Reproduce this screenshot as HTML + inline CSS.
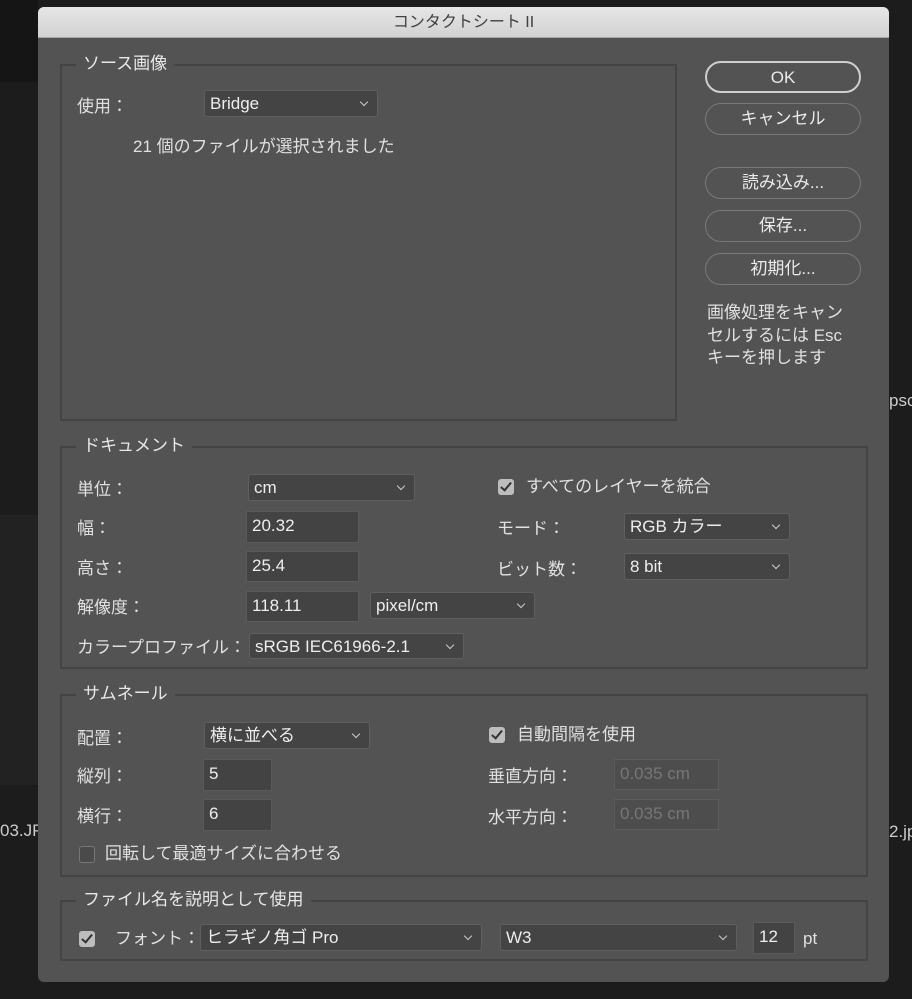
<!DOCTYPE html>
<html><head><meta charset="utf-8">
<style>
*{box-sizing:border-box;margin:0;padding:0}
body{width:912px;height:999px;background:#1c1c1c;position:relative;overflow:hidden;font-family:"Liberation Sans","Noto Sans CJK JP",sans-serif;font-size:17px;color:#e0e0e0}
.a{position:absolute;white-space:nowrap;line-height:20px}
.dlg{position:absolute;left:38px;top:7px;width:851px;height:975px;background:#535353;border-radius:6px;overflow:hidden}
.title{position:absolute;left:0;top:0;width:100%;height:31px;background:linear-gradient(#e6e6e6,#d2d2d2);border-bottom:1px solid #a8a8a8;color:#404040;text-align:center;line-height:31px;font-size:16px}
.grp{position:absolute;border:2px solid #444}
.leg{position:absolute;background:#535353;padding:0 7px;line-height:20px;top:-12px;left:14px;color:#e8e8e8}
.sel{position:absolute;background:#444;border:1px solid #5f5f5f;border-radius:3px;color:#eee;padding-left:5px;line-height:26px}
.sel:after{content:"";position:absolute;right:10px;top:8px;width:5px;height:5px;border-right:1.5px solid #ccc;border-bottom:1.5px solid #ccc;transform:rotate(45deg)}
.inp{position:absolute;background:#434343;border:1.5px solid #5a5a5a;color:#eee;padding-left:5px;line-height:28px}
.dis{background:#4d4d4d;border-color:#5c5c5c;color:#777}
.btn{position:absolute;left:667px;width:156px;height:32px;border:1.5px solid #797979;border-radius:16px;text-align:center;line-height:30px;color:#eaeaea}
.cb{position:absolute;width:16px;height:16px;border-radius:3px;background:#bdbdbd}
.cb:after{content:"";position:absolute;left:5px;top:1px;width:4px;height:9px;border-right:2.5px solid #333;border-bottom:2.5px solid #333;transform:rotate(40deg)}
.cbu{position:absolute;width:16px;height:17px;border-radius:3px;border:1.5px solid #777;background:#4a4a4a}
</style></head><body>
<div style="position:absolute;left:0;top:0;width:38px;height:82px;background:#151515"></div>
<div style="position:absolute;left:0;top:515px;width:38px;height:270px;background:#222"></div>
<div class="a" style="left:0;top:821px;color:#ccc">03.JP</div>
<div class="a" style="left:889px;top:391px;color:#ccc">psc</div>
<div class="a" style="left:889px;top:822px;color:#ccc">2.jp</div>
<div class="dlg">
<div class="title">コンタクトシート II</div>
<div class="grp" style="left:22px;top:57px;width:617px;height:357px"><div class="leg">ソース画像</div></div>
<div class="a" style="left:39px;top:90px">使用：</div>
<div class="sel" style="left:166px;top:83px;width:174px;height:27px">Bridge</div>
<div class="a" style="left:95px;top:130px">21 個のファイルが選択されました</div>
<div class="btn" style="top:54px;border-color:#cfcfcf;border-width:2px">OK</div>
<div class="btn" style="top:96px">キャンセル</div>
<div class="btn" style="top:160px">読み込み...</div>
<div class="btn" style="top:203px">保存...</div>
<div class="btn" style="top:246px">初期化...</div>
<div class="a" style="left:669px;top:295px;line-height:22.5px">画像処理をキャン<br>セルするには Esc<br>キーを押します</div>
<div class="grp" style="left:22px;top:439px;width:808px;height:223px"><div class="leg">ドキュメント</div></div>
<div class="a" style="left:39px;top:473px">単位：</div>
<div class="sel" style="left:210px;top:467px;width:167px;height:27px">cm</div>
<div class="a" style="left:39px;top:512px">幅：</div>
<div class="inp" style="left:208px;top:504px;width:113px;height:32px">20.32</div>
<div class="a" style="left:39px;top:552px">高さ：</div>
<div class="inp" style="left:208px;top:544px;width:113px;height:31px">25.4</div>
<div class="a" style="left:39px;top:591px">解像度：</div>
<div class="inp" style="left:208px;top:584px;width:113px;height:31px">118.11</div>
<div class="sel" style="left:332px;top:585px;width:165px;height:27px">pixel/cm</div>
<div class="a" style="left:39px;top:631px">カラープロファイル：</div>
<div class="sel" style="left:211px;top:626px;width:215px;height:26px">sRGB IEC61966-2.1</div>
<div class="cb" style="left:460px;top:472px"></div>
<div class="a" style="left:488px;top:470px">すべてのレイヤーを統合</div>
<div class="a" style="left:459px;top:512px">モード：</div>
<div class="sel" style="left:586px;top:506px;width:166px;height:27px">RGB カラー</div>
<div class="a" style="left:459px;top:553px">ビット数：</div>
<div class="sel" style="left:586px;top:546px;width:166px;height:27px">8 bit</div>
<div class="grp" style="left:22px;top:687px;width:808px;height:183px"><div class="leg">サムネール</div></div>
<div class="a" style="left:39px;top:722px">配置：</div>
<div class="sel" style="left:166px;top:715px;width:166px;height:27px">横に並べる</div>
<div class="a" style="left:39px;top:760px">縦列：</div>
<div class="inp" style="left:165px;top:752px;width:69px;height:32px">5</div>
<div class="a" style="left:39px;top:800px">横行：</div>
<div class="inp" style="left:165px;top:792px;width:69px;height:32px">6</div>
<div class="cbu" style="left:41px;top:839px"></div>
<div class="a" style="left:67px;top:837px">回転して最適サイズに合わせる</div>
<div class="cb" style="left:451px;top:720px"></div>
<div class="a" style="left:479px;top:718px">自動間隔を使用</div>
<div class="a" style="left:450px;top:760px">垂直方向：</div>
<div class="inp dis" style="left:576px;top:752px;width:105px;height:31px">0.035 cm</div>
<div class="a" style="left:450px;top:801px">水平方向：</div>
<div class="inp dis" style="left:576px;top:792px;width:105px;height:31px">0.035 cm</div>
<div class="grp" style="left:22px;top:893px;width:808px;height:61px"><div class="leg">ファイル名を説明として使用</div></div>
<div class="cb" style="left:41px;top:924px"></div>
<div class="a" style="left:77px;top:922px">フォント：</div>
<div class="sel" style="left:162px;top:917px;width:282px;height:27px">ヒラギノ角ゴ Pro</div>
<div class="sel" style="left:462px;top:917px;width:237px;height:27px">W3</div>
<div class="inp" style="left:715px;top:915px;width:42px;height:32px">12</div>
<div class="a" style="left:765px;top:922px">pt</div>
</div>
</body></html>
